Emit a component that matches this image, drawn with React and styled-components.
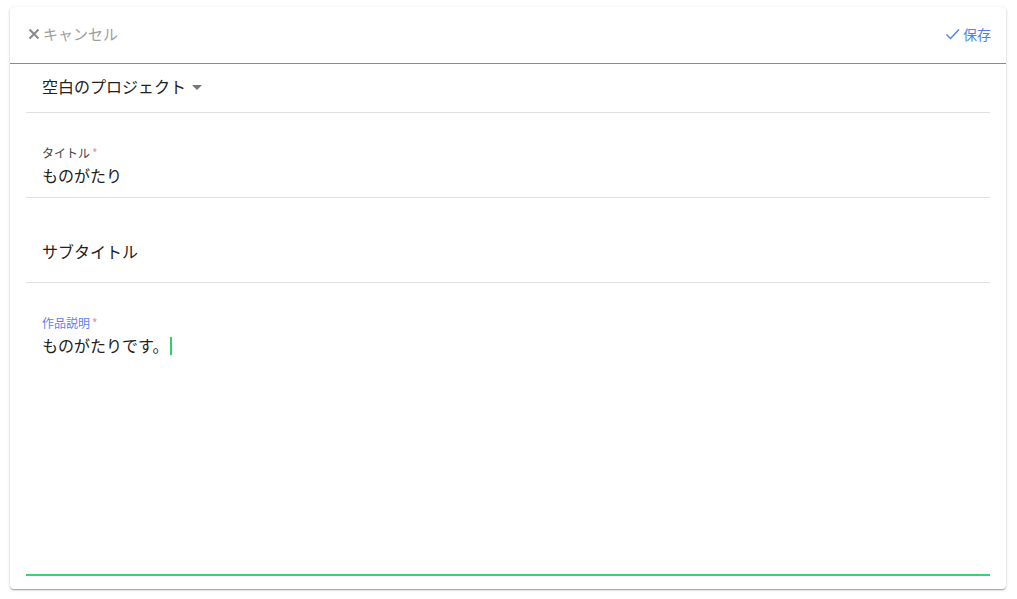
import React from "react";
import styled, { createGlobalStyle } from "styled-components";

const Global = createGlobalStyle`
  html, body { margin: 0; padding: 0; background: #ffffff; }
  body { font-family: "Noto Sans CJK JP", "Noto Sans", Roboto, sans-serif; color: #212121; }
`;

const Page = styled.div`
  padding: 7px 11px 10px 10px;
`;

const Card = styled.div`
  background: #fff;
  border-radius: 4px;
  height: 582px;
  box-sizing: border-box;
  box-shadow: 0 1px 3px rgba(0,0,0,0.22), 0 1px 1px rgba(0,0,0,0.14), 0 2px 1px -1px rgba(0,0,0,0.12);
  display: flex;
  flex-direction: column;
  overflow: hidden;
`;

const Header = styled.div`
  height: 57px;
  flex: none;
  box-sizing: border-box;
  border-bottom: 1px solid #8a8a8a;
  display: flex;
  align-items: center;
  justify-content: space-between;
  padding: 0 15px 3px 17px;
`;

const HeadButton = styled.button`
  background: none;
  border: none;
  padding: 0;
  display: flex;
  align-items: center;
  gap: 2px;
  font-family: inherit;
  font-size: ${p => p.$size}px;
  color: ${p => p.$color};
  cursor: pointer;
  line-height: 20px;
`;

const Body = styled.div`
  flex: 1;
  display: flex;
  flex-direction: column;
  padding: 0 16px 13px;
`;

const Row = styled.div`
  height: ${p => p.$h}px;
  flex: none;
  box-sizing: border-box;
  border-bottom: 1px solid #e0e0e0;
  padding: ${p => p.$pt}px 16px 0;
`;

const SelectRow = styled.div`
  height: 49px;
  flex: none;
  box-sizing: border-box;
  border-bottom: 1px solid #e0e0e0;
  padding: 0 16px 4px;
  display: flex;
  align-items: center;
  font-size: 16px;
`;

const Caret = styled.span`
  width: 0;
  height: 0;
  border-left: 5px solid transparent;
  border-right: 5px solid transparent;
  border-top: 5px solid #777;
  margin-left: 6px;
  margin-top: 2px;
`;

const Label = styled.div`
  font-size: 12px;
  line-height: 16px;
  color: ${p => p.$color};
  margin-bottom: 2px;
`;

const Star = styled.span`
  color: #ef8aa0;
  margin-left: 2px;
`;

const Value = styled.div`
  font-size: 16px;
  line-height: 24px;
  color: #212121;
  display: flex;
  align-items: center;
`;

const Area = styled.div`
  flex: 1;
  border-bottom: 2px solid #3ccf74;
  padding: 32px 16px 0;
`;

const Cursor = styled.span`
  display: inline-block;
  width: 1.5px;
  height: 18px;
  background: #2fcf6c;
  margin-left: 2px;
  margin-top: 2px;
`;

export default function App() {
  return (
    <>
      <Global />
      <Page>
        <Card>
          <Header>
            <HeadButton $size={15} $color="#9e9e9e">
              <svg width="14" height="14" viewBox="0 0 14 14">
                <path d="M2.5 2.5 L11.5 11.5 M11.5 2.5 L2.5 11.5" stroke="#8a8a8a" strokeWidth="2" />
              </svg>
              キャンセル
            </HeadButton>
            <HeadButton $size={14} $color="#4a82ee">
              <svg width="16" height="14" viewBox="0 0 16 14">
                <path d="M1.5 7.5 L5.5 11.5 L14 2.5" stroke="#4a82ee" strokeWidth="1.4" fill="none" />
              </svg>
              保存
            </HeadButton>
          </Header>
          <Body>
            <SelectRow>
              空白のプロジェクト
              <Caret />
            </SelectRow>
            <Row $h={85} $pt={32}>
              <Label $color="#444">タイトル<Star>*</Star></Label>
              <Value>ものがたり</Value>
            </Row>
            <Row $h={85} $pt={41}>
              <Value>サブタイトル</Value>
            </Row>
            <Area>
              <Label $color="#5b7ff2">作品説明<Star>*</Star></Label>
              <Value>ものがたりです。<Cursor /></Value>
            </Area>
          </Body>
        </Card>
      </Page>
    </>
  );
}
